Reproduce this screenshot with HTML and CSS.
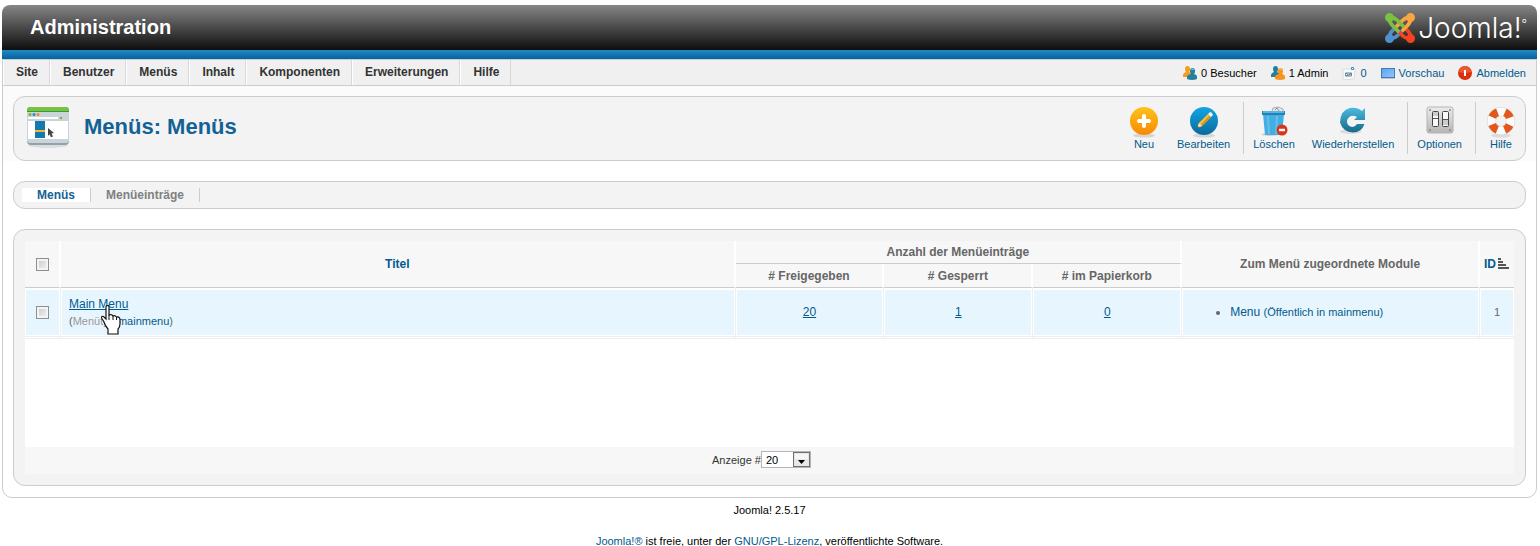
FILE: index.html
```html
<!DOCTYPE html>
<html lang="de">
<head>
  <meta charset="UTF-8" />
  <title>Administration - Menüs</title>
  <meta name="viewport" content="width=device-width, initial-scale=1.0" />
  <link rel="stylesheet" href="styles.css">
</head>
<body>
  <header class="top">
    <h1>Administration</h1>
    <div class="logo">
      <svg width="30" height="30" viewBox="0 0 30 30" fill="none" stroke-width="3.8" stroke-linecap="round">
        <g stroke="#5091cd">
          <circle cx="4.5" cy="25.5" r="2.6" fill="#5091cd" />
          <path d="M5 25Q4 21 7 18L16 9M5 25Q9 26 12 23L18 17" />
        </g>
        <g stroke="#f44321">
          <circle cx="25.5" cy="25.5" r="2.6" fill="#f44321" />
          <path d="M25 25Q21 26 18 23L9 14M25 25Q26 21 23 18L17 12" />
        </g>
        <g stroke="#f9a541">
          <circle cx="25.5" cy="4.5" r="2.6" fill="#f9a541" />
          <path d="M25 5Q26 9 23 12L18 17M25 5Q21 4 18 7L12 13" />
        </g>
        <g stroke="#7ac143">
          <circle cx="4.5" cy="4.5" r="2.6" fill="#7ac143" />
          <path d="M5 5Q9 4 12 7L18 13M5 5Q4 9 7 12L13 18" />
        </g>
      </svg>
      <span class="logo-text">Joomla!<sup>°</sup></span>
    </div>
  </header>

  <div class="page">
    <div class="bar">
      <nav class="menu">
        <a href="#">Site</a>
        <a href="#">Benutzer</a>
        <a href="#">Menüs</a>
        <a href="#">Inhalt</a>
        <a href="#">Komponenten</a>
        <a href="#">Erweiterungen</a>
        <a href="#">Hilfe</a>
      </nav>
      <div class="status">
        <span class="status-item">
          <svg width="14" height="14" viewBox="0 0 14 14">
            <path d="M2 3q0-3 2.5-3T7 3t-1 3l2 1v4H0V9q0-2 3-3Q2 5 2 3z" fill="#f39c1f" />
            <path d="M7 5q0-3 2.5-3T12 5t-1 3q3 .5 3 3v2q-5 2-10 0v-2q0-2 4-3Q7 7 7 5z" fill="#277f9f" />
            <path d="M8 4q0-1.5 1.5-1.5T11 4z" fill="#6cc0de" />
          </svg>
          0 Besucher
        </span>
        <span class="status-item">
          <svg width="14" height="14" viewBox="0 0 14 14">
            <path d="M2 3q0-3 2.5-3T7 3t-1 3l2 1v4H0V9q0-2 3-3Q2 5 2 3z" fill="#277f9f" />
            <path d="M7 5q0-3 2.5-3T12 5t-1 3q3 .5 3 3v2q-5 2-10 0v-2q0-2 4-3Q7 7 7 5z" fill="#f6941f" />
            <path d="M8 4q0-1.5 1.5-1.5T11 4z" fill="#fdc766" />
          </svg>
          1 Admin
        </span>
        <a class="status-item" href="#">
          <svg width="14" height="14" viewBox="0 0 14 14">
            <path d="M1 3h12l-1 10-11 1z" fill="#fafafa" stroke="#dcdcdc" />
            <path d="M3.5 7h6v3h-6zM4 7l2.5 2L9 7M4 10l5-2" fill="none" stroke="#5c87a5" />
            <path d="M9.5 1.5h2v2h-2z" fill="#fff" stroke="#3a88c0" />
          </svg>
          0
        </a>
        <a class="status-item" href="#">
          <svg width="14" height="14" viewBox="0 0 14 14">
            <defs>
              <linearGradient id="screen" x2="1" y2="1">
                <stop stop-color="#5aa2f0" /><stop offset="1" stop-color="#93c8fb" />
              </linearGradient>
            </defs>
            <rect x=".5" y="2.5" width="13" height="9" fill="url(#screen)" stroke="#4279ba" />
            <path d="M0 12.5h14" stroke="#c5c5c5" />
          </svg>
          Vorschau
        </a>
        <a class="status-item" href="#">
          <svg width="14" height="14" viewBox="0 0 14 14">
            <circle cx="7" cy="7" r="7" fill="#d9300e" />
            <path d="M1 6a6 6 0 0 1 12 0Q7 8 1 6z" fill="#ec5631" />
            <path d="M7 4v6" stroke="#fff" stroke-width="2" />
          </svg>
          Abmelden
        </a>
      </div>
    </div>

    <div class="title-area">
      <div class="box title-box">
        <svg class="title-icon" width="44" height="42" viewBox="0 0 44 42">
          <ellipse cx="22" cy="38" rx="20" ry="3" fill="#dcdcdc" />
          <rect x="1" y="0" width="42" height="38" rx="4" fill="#8fa3ad" />
          <path d="M1 5h42v28q0 3-3 3H4q-3 0-3-3z" fill="#c9d3d8" />
          <path d="M1 5V4q0-4 4-4h34q4 0 4 4v1z" fill="#2f9e3c" />
          <path d="M1 4q0-4 4-4h34q4 0 4 4z" fill="#7cc242" />
          <circle cx="4" cy="7.5" r="1.5" fill="#7cb52f" />
          <circle cx="8" cy="7.5" r="1.5" fill="#1f8fc8" />
          <circle cx="12" cy="7.5" r="1.5" fill="#f58b2a" />
          <path d="M2 10h30v2H2zM2 14h40v18H2z" fill="#fff" />
          <circle cx="35" cy="11" r="1.2" fill="#7cb52f" />
          <path d="M9 14h10v17H9z" fill="#1479b0" />
          <path d="M9 23h10v2H9z" fill="#fbb62f" />
          <path d="M22 21l6 5-2.5.5 1.5 3-2 .8-1.5-3-1.5 1.7z" fill="#444" />
        </svg>
        <h2>Menüs: Menüs</h2>
        <div class="toolbar">
          <a href="#" class="tool">
            <svg width="32" height="32" viewBox="0 0 32 32">
              <defs>
                <linearGradient id="orange" x2="0" y2="1">
                  <stop stop-color="#fdc21c" /><stop offset="1" stop-color="#f68a05" />
                </linearGradient>
              </defs>
              <ellipse cx="16" cy="29.5" rx="11" ry="2" fill="#d6d6d6" />
              <circle cx="16" cy="15" r="14" fill="url(#orange)" />
              <path d="M16 10v10M11 15h10" stroke="#fff" stroke-width="4" stroke-linecap="round" />
            </svg>
            Neu
          </a>
          <a href="#" class="tool">
            <svg width="32" height="32" viewBox="0 0 32 32">
              <defs>
                <linearGradient id="blue" x2="0" y2="1">
                  <stop stop-color="#12a5e6" /><stop offset="1" stop-color="#0a6a9c" />
                </linearGradient>
              </defs>
              <ellipse cx="16" cy="29.5" rx="11" ry="2" fill="#d6d6d6" />
              <circle cx="16" cy="15" r="14" fill="url(#blue)" />
              <path d="M9 22l2-5 9-9 3 3-9 9z" fill="#fbc23a" />
              <path d="M12.5 18.5l9-9 1.5 1.5-9 9z" fill="#e0921b" />
              <path d="M20 8l2-2q2 0 3 3l-2 2z" fill="#f3f3f3" />
              <path d="M9 22l2-5 3 3z" fill="#f6dfb6" />
              <path d="M9 22l.8-2 1.2 1.2z" fill="#222" />
            </svg>
            Bearbeiten
          </a>
          <span class="divider"></span>
          <a href="#" class="tool">
            <svg width="32" height="32" viewBox="0 0 32 32">
              <ellipse cx="12" cy="28.5" rx="9" ry="1.5" fill="#d0d0d0" />
              <path d="M14 5l1-3 5-1 5 2v4H14z" fill="#e8e8e8" stroke="#aaa" />
              <path d="M17 4l2-2 2 3" fill="none" stroke="#888" />
              <path d="M5 8h21l-2 21H7z" fill="#43aee2" />
              <path d="M9 10h2l1 18h-2zM18 10h2l-1 18h-2z" fill="#66bfea" />
              <path d="M4 5h23v4H4z" fill="#2581b0" />
              <path d="M5 5h21v2H5z" fill="#55b8e6" />
              <circle cx="24" cy="24" r="5.5" fill="#d8341a" />
              <path d="M21 24h6" stroke="#fff" stroke-width="2.5" />
            </svg>
            Löschen
          </a>
          <a href="#" class="tool">
            <svg width="32" height="32" viewBox="0 0 32 32">
              <defs>
                <linearGradient id="arrow" x2="0" y2="1">
                  <stop stop-color="#4cb9e0" /><stop offset="1" stop-color="#14698a" />
                </linearGradient>
              </defs>
              <ellipse cx="14" cy="25.5" rx="11" ry="2.5" fill="#dcdcdc" />
              <path d="M28 2v12H17l3-3q-3-2-6-1-4 2-4 5.5t3.5 5q4 1.5 6.500-2.500h7.500q-3 8.500-11.500 8.500-10-.5-13-10Q3.500 4 13 2q7-1 12 3z" fill="url(#arrow)" />
            </svg>
            Wiederherstellen
          </a>
          <span class="divider"></span>
          <a href="#" class="tool">
            <svg width="32" height="32" viewBox="0 0 32 32">
              <defs>
                <linearGradient id="steel" x2="0" y2="1">
                  <stop stop-color="#ededed" /><stop offset="1" stop-color="#b4b4b4" />
                </linearGradient>
              </defs>
              <rect x="3" y="1" width="26" height="26" rx="2" fill="url(#steel)" stroke="#b4b4b4" />
              <g fill="#888">
                <circle cx="6" cy="4" r="1" /><circle cx="26" cy="4" r="1" />
                <circle cx="6" cy="24" r="1" /><circle cx="26" cy="24" r="1" />
              </g>
              <rect x="8.5" y="5.5" width="6" height="15" rx="1" fill="#fafafa" stroke="#444" />
              <rect x="18.5" y="5.5" width="6" height="15" rx="1" fill="#fafafa" stroke="#444" />
              <path d="M9 12.5h5M19 13.5h5" stroke="#555" />
              <path d="M19 14h5v5h-5zM9 6h5v4H9z" fill="#ccc" />
            </svg>
            Optionen
          </a>
          <span class="divider"></span>
          <a href="#" class="tool">
            <svg width="32" height="32" viewBox="0 0 32 32">
              <ellipse cx="16" cy="29.5" rx="10" ry="2" fill="#dcdcdc" />
              <circle cx="16" cy="15" r="9.5" fill="none" stroke="#d8d4d0" stroke-width="9" />
              <circle cx="16" cy="15" r="9.5" fill="none" stroke="#fbfbfb" stroke-width="8" />
              <circle cx="16" cy="15" r="9.5" fill="none" stroke="#e2571c" stroke-width="8" stroke-dasharray="7.46" stroke-dashoffset="3.73" transform="rotate(45 16 15)" />
            </svg>
            Hilfe
          </a>
        </div>
      </div>
    </div>

    <div class="box submenu">
      <a href="#" class="active">Menüs</a>
      <a href="#">Menüeinträge</a>
    </div>

    <form class="box list-box">
      <table>
        <colgroup>
          <col class="col-check"><col>
          <col class="col-count"><col class="col-count"><col class="col-count">
          <col class="col-modules"><col class="col-id">
        </colgroup>
        <thead>
          <tr>
            <th rowspan="2"><input type="checkbox" aria-label="Alle auswählen"></th>
            <th rowspan="2"><a href="#">Titel</a></th>
            <th colspan="3">Anzahl der Menüeinträge</th>
            <th rowspan="2">Zum Menü zugeordnete Module</th>
            <th rowspan="2" class="id-head"><a href="#">ID<svg width="12" height="12" viewBox="0 0 12 12"><path d="M0 1h3M0 4h5M0 7h8M0 10h11" stroke="#555" stroke-width="2" /></svg></a></th>
          </tr>
          <tr>
            <th># Freigegeben</th>
            <th># Gesperrt</th>
            <th># im Papierkorb</th>
          </tr>
        </thead>
        <tbody>
          <tr>
            <td><input type="checkbox" aria-label="Main Menu auswählen"></td>
            <td class="title-cell">
              <a href="#">Main Menu</a>
              <p>(<span>Menütyp</span> <a href="#">mainmenu</a>)</p>
              <svg class="hand" width="20" height="30" viewBox="0 0 20 30">
                <path d="M5 2q0-1.5 1.5-1.5T8 2v8q3-1 4 1 2-1 3.5 1Q19 11.5 19 15v4q0 3-2 5v5H7v-5q-3-3-4-7L.5 13q-.5-2 2-1.5L5 14z" fill="#fff" stroke="#111" stroke-width="1.2" />
                <path d="M8 10v5M12 11v4M15.5 12v3" stroke="#111" />
              </svg>
            </td>
            <td><a href="#">20</a></td>
            <td><a href="#">1</a></td>
            <td><a href="#">0</a></td>
            <td class="modules-cell">
              <ul>
                <li><a href="#">Menu <small>(Öffentlich in mainmenu)</small></a></li>
              </ul>
            </td>
            <td class="id-cell">1</td>
          </tr>
          <tr class="end-row">
            <td></td><td></td><td></td><td></td><td></td><td></td><td></td>
          </tr>
        </tbody>
      </table>
      <div class="list-space"></div>
      <div class="pagination">
        <label for="limit">Anzeige #</label>
        <span class="select-wrap">
          <select id="limit">
            <option>5</option>
            <option>10</option>
            <option selected>20</option>
            <option>50</option>
          </select>
          <svg class="select-arrow" width="17" height="15" viewBox="0 0 17 15">
            <rect x=".5" y=".5" width="16" height="14" fill="#e8e8e8" stroke="#707070" />
            <path d="M2 2h13v5H2z" fill="#f6f6f6" />
            <path d="M5 8h7l-3.5 4z" fill="#000" />
          </svg>
        </span>
      </div>
    </form>
  </div>

  <footer>
    <p>Joomla! 2.5.17</p>
    <p><a href="#">Joomla!®</a> ist freie, unter der <a href="#">GNU/GPL-Lizenz</a>, veröffentlichte Software.</p>
  </footer>
</body>
</html>
```
FILE: styles.css
```css
body {
  font-family: "Liberation Sans", Arial, sans-serif;
  font-size: 11px;
  background: #fff;
  color: #000;
  margin: 5px 3px 0 2px;
}

a {
  color: #025a8d;
  text-decoration: none;
}

h1, h2, p, ul {
  margin: 0;
}

svg {
  display: block;
  flex: none;
}

.top {
  display: flex;
  justify-content: space-between;
  align-items: center;
  height: 45px;
  padding: 0 10px 9px 28px;
  background:
    linear-gradient(#2389c5, #04639b) bottom / 100% 9px no-repeat,
    linear-gradient(#868686, #0d0d0d) top / 100% 45px no-repeat;
  border-radius: 8px 8px 0 0;
}

.top h1 {
  font-size: 20px;
  color: #fff;
}

.logo {
  display: flex;
  align-items: center;
  gap: 3px;
}

.logo-text {
  font-family: Inter, sans-serif;
  font-size: 28px;
  font-weight: 300;
  line-height: 30px;
  color: #fff;
}

.logo-text sup {
  font-size: 12px;
  line-height: 1;
}

.page {
  border: 1px solid #ccc;
  border-radius: 0 0 10px 10px;
  padding-bottom: 11px;
}

.bar {
  display: flex;
  justify-content: space-between;
  align-items: center;
  height: 25px;
  background: #f0f0f0;
  border-bottom: 1px solid #ccc;
}

.menu {
  display: flex;
}

.menu a {
  padding: 0 11px 0 12px;
  line-height: 25px;
  font-size: 12px;
  font-weight: bold;
  color: #333;
  border-left: 1px solid #fff;
  border-right: 1px solid #d8d8d8;
}

.status {
  display: flex;
  gap: 14px;
  padding-right: 10px;
}

.status-item {
  display: flex;
  align-items: center;
  gap: 4px;
}

.title-area {
  padding: 10px 10px 0;
  background: #fbfbfb;
}

.box {
  border: 1px solid #ccc;
  border-radius: 12px;
  background: #f3f3f3;
}

.title-box {
  display: flex;
  align-items: center;
  height: 61px;
  padding: 0 0 2px 12px;
}

.title-box h2 {
  flex: 1;
  margin-left: 14px;
  padding-bottom: 2px;
  font-size: 22px;
  line-height: 30px;
  color: #146295;
}

.toolbar {
  display: flex;
}

.tool {
  display: flex;
  flex-direction: column;
  align-items: center;
  min-width: 32px;
  margin: 0 8px 0 9px;
  padding-top: 4px;
  line-height: 12px;
}

.divider {
  width: 1px;
  height: 52px;
  margin-left: 5px;
  background: #ccc;
}

.submenu {
  display: flex;
  align-items: center;
  height: 26px;
  margin: 20px 10px 0;
  padding-left: 8px;
}

.submenu a {
  padding: 0 15px;
  font-size: 12px;
  line-height: 14px;
  font-weight: bold;
  color: #808080;
  border-right: 1px solid #ccc;
}

.submenu .active {
  color: #146295;
  background: #fff;
}

.list-box {
  margin: 20px 10px 0;
  padding: 11px;
}

table {
  width: 100%;
  table-layout: fixed;
  border-spacing: 0;
  background: #fff;
  font-size: 12px;
  color: #666;
}

.col-check {
  width: 36px;
}

.col-count {
  width: 10%;
}

.col-modules {
  width: 20%;
}

.col-id {
  width: 34px;
}

th {
  height: 22px;
  padding: 0;
  background: #f7f7f7;
  border-bottom: 1px solid #ccc;
  border-right: 2px solid #fff;
}

thead tr + tr th {
  height: 23px;
}

.id-head {
  border-right: 0;
}

.id-head a {
  display: flex;
  justify-content: center;
  align-items: center;
  gap: 2px;
}

td {
  position: relative;
  height: 48px;
  padding: 0;
  text-align: center;
  background: #e7f6fe;
  border-right: 1px solid #eee;
  border-bottom: 1px solid #eee;
  box-shadow: inset 0 0 0 1px #fff, inset 0 2px #fff;
}

td:last-child {
  border-right: 0;
}

td a {
  text-decoration: underline;
}

.end-row td {
  height: 1px;
  background: #fff;
}

td.title-cell {
  padding-left: 8px;
  text-align: left;
}

.title-cell p {
  margin-top: 4px;
  font-size: 11px;
  line-height: 12px;
}

.title-cell p a, .modules-cell a {
  text-decoration: none;
}

.title-cell span {
  color: #999;
}

/* pointer drawn over the link */
.hand {
  position: absolute;
  left: 40px;
  top: 17px;
}

.modules-cell ul {
  padding-left: 48px;
  text-align: left;
}

.modules-cell small {
  font-size: 11px;
}

td.id-cell {
  font-size: 11px;
}

input[type="checkbox"] {
  appearance: none;
  display: block;
  width: 13px;
  height: 13px;
  margin: 0 auto;
  border: 1px solid #8e8f8f;
  background: linear-gradient(135deg, #c4c8d0, #f6f6f6);
  box-shadow: inset 0 0 0 2px #f4f4f4;
}

.list-space {
  height: 108px;
  background: #fff;
}

.pagination {
  display: flex;
  justify-content: center;
  align-items: center;
  height: 25px;
  padding: 0 16px 2px 0;
  background: #f7f7f7;
  color: #333;
}

.select-wrap {
  position: relative;
}

select {
  appearance: none;
  display: block;
  width: 50px;
  height: 17px;
  padding: 0 4px;
  border: 1px solid #b5b5b5;
  border-radius: 0;
  background: #fff;
  font: 11px "Liberation Sans", Arial, sans-serif;
  color: #000;
}

.select-arrow {
  position: absolute;
  top: 1px;
  right: 1px;
  pointer-events: none;
}

footer {
  padding-top: 6px;
  text-align: center;
  line-height: 13px;
}

footer p {
  margin-bottom: 18px;
}

footer p:last-child {
  margin-bottom: 0;
}
```
